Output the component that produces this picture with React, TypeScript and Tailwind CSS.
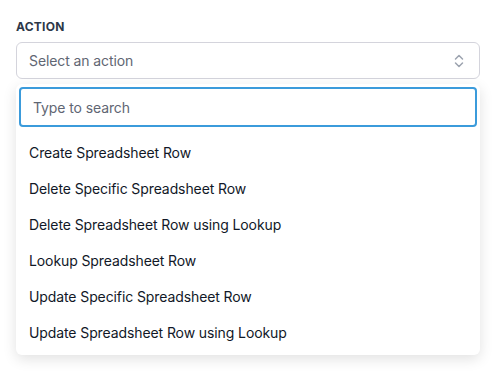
import React from 'react';

const actions = [
    'Create Spreadsheet Row',
    'Delete Specific Spreadsheet Row',
    'Delete Spreadsheet Row using Lookup',
    'Lookup Spreadsheet Row',
    'Update Specific Spreadsheet Row',
    'Update Spreadsheet Row using Lookup',
];

const ChevronUpDown = () => (
    <svg width="12" height="16" viewBox="0 0 12 16" fill="none" stroke="#9ca3af" strokeWidth="1.5" strokeLinecap="round" strokeLinejoin="round">
        <path d="M2.5 6 6 2.5 9.5 6" />
        <path d="M2.5 10 6 13.5 9.5 10" />
    </svg>
);

export default function App() {
    return (
        <div className="min-h-[373px] w-[496px] bg-white px-4 pt-[19px]" style={{ fontFamily: 'Inter, "Noto Sans", sans-serif' }}>
            <div className="text-[12px] font-bold tracking-[0.02em] text-[#2d3748] leading-[16px]">ACTION</div>
            <div className="mt-[7px] flex h-[37px] items-center justify-between rounded-[6px] border border-[#d4d4dc] bg-white pl-[12px] pr-[14px]">
                <span className="text-[14px] tracking-[-0.1px] text-[#5f6673]">Select an action</span>
                <ChevronUpDown />
            </div>
            <div className="mt-[5px] rounded-[6px] bg-white px-[3px] pt-[3px] pb-[5px] shadow-[0_4px_14px_rgba(0,0,0,0.12)]">
                <div className="flex h-[40px] items-center rounded-[4px] border-2 border-[#3b9bdb] px-[12px]">
                    <span className="text-[14px] tracking-[-0.1px] text-[#5f6673]">Type to search</span>
                </div>
                <div className="mt-[7px] flex flex-col">
                    {actions.map(a => (
                        <div key={a} className="flex h-[36px] items-center px-[10px] text-[14px] tracking-[-0.1px] text-[#111827]">
                            {a}
                        </div>
                    ))}
                </div>
            </div>
        </div>
    );
}
